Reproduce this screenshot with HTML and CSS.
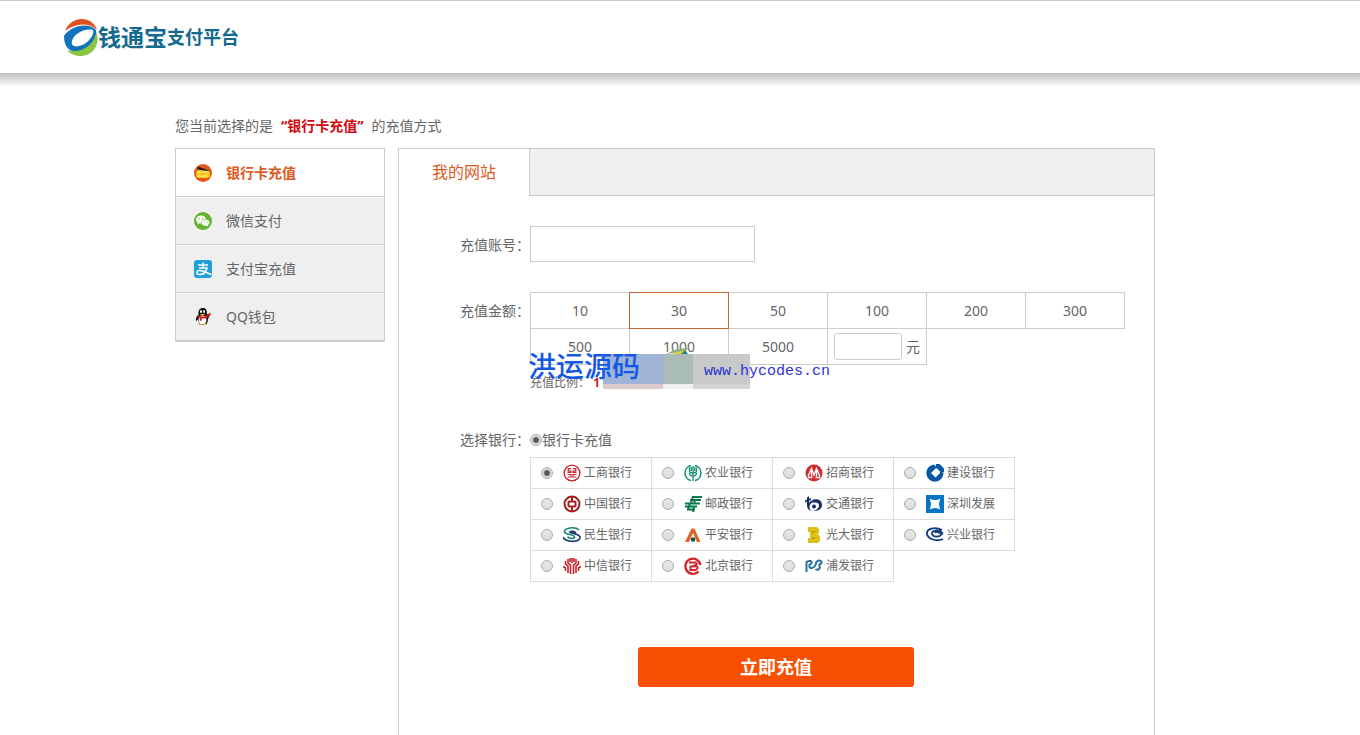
FILE: index.html
```html
<!DOCTYPE html>
<html lang="zh-CN">
<head>
<meta charset="utf-8">
<title>钱通宝支付平台</title>
<link rel="stylesheet" href="styles.css">
</head>
<body>
<header class="header">
  <a class="logo" href="#">
    <svg class="logo-mark" viewBox="0 0 34 38" aria-hidden="true">
      <path d="M1 13C4 5 11 1 18 1c8 0 13 5 15 11C25 4 11 5 1 13z" fill="#e2501c"/>
      <path d="M3 32c10 4 24-3 29-18 5 11-2 23-14 24-7 0-12-2-15-6z" fill="#8cc63f"/>
      <path d="M0 18C7 7 25 4 32 12c1 11-11 22-23 21C3 32 0 26 0 18zm8 5c-2 7 8 7 15 1 5-4 7-9 6-12-7-2-19 3-21 11z" fill="#1273bd" fill-rule="evenodd"/>
    </svg>
    <span class="logo-name">钱通宝</span><span class="logo-sub">支付平台</span>
  </a>
</header>
<main class="page">
  <p class="current">您当前选择的是<strong class="current-name">“银行卡充值”</strong>的充值方式</p>
  <div class="columns">
    <nav class="menu">
      <a class="menu-item menu-item-on" href="#">
        <svg class="menu-icon" viewBox="0 0 18 18"><circle cx="9" cy="9" r="9" fill="#e2551d"/><path d="M4 2.500l11 4v2L3 5z" fill="#222"/><path d="M2 8l2-2 11 1 1 2v4l-2 1H4l-2-1z" fill="#fcc60f"/><path d="M3 8h12" stroke="#fff3a8"/><path d="M4 12h10" stroke="#fff" stroke-dasharray="2 1"/></svg>
        银行卡充值</a>
      <a class="menu-item" href="#">
        <svg class="menu-icon" viewBox="0 0 18 18"><circle cx="9" cy="9" r="9" fill="#62b32f"/><path d="M7 3.500c-3 0-5 1.900-5 4 0 1.200.7 2.400 1.800 3.100L3.500 12.500l2-1.200c3.500.6 6.500-1 6.500-3.800C12 5.200 9.800 3.500 7 3.500z" fill="#fff"/><path d="M11.700 7.300c-2.700 0-4.400 1.600-4.400 3.500 0 2.400 2.500 3.800 5.200 3.200l1.900 1-.5-1.600c1.100-.6 1.900-1.600 1.900-2.800 0-1.900-1.900-3.300-4.100-3.300z" fill="#fff" stroke="#62b32f" stroke-width=".6"/><g fill="#62b32f"><circle cx="5.300" cy="6.500" r=".7"/><circle cx="8.500" cy="6.500" r=".7"/><circle cx="10.300" cy="10" r=".6"/><circle cx="13" cy="10" r=".6"/></g></svg>
        微信支付</a>
      <a class="menu-item" href="#">
        <svg class="menu-icon" viewBox="0 0 18 18"><rect width="18" height="18" rx="3" fill="#1fa0dc"/><path d="M4 5h10M9 2.500V8M5 8h8c-1 4-4 6.500-7.500 6.500-3.500 0-3.500-4 0-4 4 0 7 2.500 12 4" fill="none" stroke="#fff" stroke-width="1.500"/></svg>
        支付宝充值</a>
      <a class="menu-item" href="#">
        <svg class="menu-icon" viewBox="0 0 18 18"><path d="M9 0C5.500 0 4 2.500 4.500 6.500 2 9 1.500 11 2 13l2-1.500C5 16 6 17 9 17s5-2 5-6l2-4-3-1C13 2 12 0 9 0z" fill="#111"/><ellipse cx="8.500" cy="12" rx="4" ry="4.500" fill="#fff"/><ellipse cx="7" cy="3.500" rx="1" ry="1.500" fill="#fff"/><ellipse cx="10" cy="3.500" rx="1" ry="1.500" fill="#fff"/><path d="M5.500 6h6l-2 1.500h-2z" fill="#f5a814"/><path d="M4 7c3 2 7 2 9 0l3-2.500 1 2-4 3c-2 1.500-3.500 1-5 1L7.500 13l-2-.5.5-2.500-2.500-1z" fill="#d9201f"/><path d="M4.500 16.500h3.500M9.500 16.500H13" stroke="#e8b040" stroke-width="1.200"/></svg>
        QQ钱包</a>
    </nav>
    <section class="panel">
      <div class="tabs"><a class="tab" href="#">我的网站</a></div>
      <form class="form">
        <div class="row">
          <label class="row-label" for="account">充值账号：</label>
          <input class="account" id="account" type="text">
        </div>
        <div class="row">
          <span class="row-label">充值金额：</span>
          <div class="amount-area">
            <div class="amounts">
              <button class="amount" type="button">10</button>
              <button class="amount amount-on" type="button">30</button>
              <button class="amount" type="button">50</button>
              <button class="amount" type="button">100</button>
              <button class="amount" type="button">200</button>
              <button class="amount" type="button">300</button>
              <button class="amount" type="button">500</button>
              <button class="amount" type="button">1000</button>
              <button class="amount" type="button">5000</button>
              <label class="amount amount-custom"><input class="custom" type="text">元</label>
            </div>
            <p class="ratio">充值比例： <b class="ratio-value">1</b></p>
            <div class="watermark">
              <div class="mark-blocks"><i class="block block-blue"></i><i class="block block-green"></i><i class="block block-gray"></i></div>
              <svg class="mark-leaf" viewBox="0 0 24 8"><path d="M0 6Q10 0 22 0l-2 3z" fill="#8fb08a"/><path d="M5 6L19 2l-2 4z" fill="#e3cf2e"/><path d="M15 6l4-4 3 4z" fill="#1f8590"/></svg>
              <span class="mark-name">洪运源码</span>
              <span class="mark-url">www.hycodes.cn</span>
            </div>
          </div>
        </div>
        <div class="row row-bank">
          <span class="row-label">选择银行：</span>
          <div>
            <label class="method"><input class="radio" type="radio" name="method" checked>银行卡充值</label>
            <div class="banks">
              <label class="bank"><input class="radio" type="radio" name="bank" checked><svg class="bank-icon" viewBox="0 0 18 18"><g fill="none" stroke="#c9252b"><circle cx="9" cy="9" r="7.900" stroke-width="1.400"/><path d="M8 4.700H5.200v2.500H8v1.300H4.500M10 4.700h2.800v2.500H10v1.300h3.500M4.500 10.500H8V13H5M13.500 10.500H10V13h3" stroke-width="1.200"/></g></svg>工商银行</label>
              <label class="bank"><input class="radio" type="radio" name="bank"><svg class="bank-icon" viewBox="0 0 18 18"><g fill="none" stroke="#119171"><path d="M7 1.500a7.700 7.700 0 0 0 0 15M11 1.500a7.700 7.700 0 0 1 0 15" stroke-width="1.500"/><path d="M9 2v15M5.500 3.500v3.500q0 2 3.500 2 3.500 0 3.500-2V3.500M5.500 9q0 3 3.500 3 3.500 0 3.500-3M7.300 3v4M10.700 3v4" stroke-width="1.300"/></g></svg>农业银行</label>
              <label class="bank"><input class="radio" type="radio" name="bank"><svg class="bank-icon" viewBox="0 0 18 18"><circle cx="9" cy="9" r="8.500" fill="#d32b33"/><path d="M3 12.500L6.500 4.500 9 11l2.500-6.500L15 12.500M6.500 7v5.500M11.500 7v5.500M3 13.500h4.500M10.500 13.500H15" fill="none" stroke="#fff" stroke-width="1.300"/></svg>招商银行</label>
              <label class="bank"><input class="radio" type="radio" name="bank"><svg class="bank-icon" viewBox="0 0 18 18"><path d="M8 .5L11.500 4l-2 .500L5 9l4.500 4.500L14 9l-.500-1.500L17.500 8.500A8.600 8.600 0 1 1 8 .5z" fill="#0757a5"/><path d="M10 0h3.500L18 4.500V8h-3.500L10 3.500z" fill="#0757a5"/></svg>建设银行</label>
              <label class="bank"><input class="radio" type="radio" name="bank"><svg class="bank-icon" viewBox="0 0 18 18"><g fill="none" stroke="#a71e20" stroke-width="2"><circle cx="9" cy="9" r="7.500"/><rect x="5.500" y="6.500" width="7" height="5" rx="1"/><path d="M9 2v4.500M9 11.500V16"/></g></svg>中国银行</label>
              <label class="bank"><input class="radio" type="radio" name="bank"><svg class="bank-icon" viewBox="0 0 18 18"><path d="M8 2h10M6 5h11M1 8.500h15M1 11.500h12M3 14.500h8M9 1.500L7 8M6 8.500L4 14M11 5l-1 3.500M10 11.500L9 17" fill="none" stroke="#087a4b" stroke-width="2"/></svg>邮政银行</label>
              <label class="bank"><input class="radio" type="radio" name="bank"><svg class="bank-icon" viewBox="0 0 18 18"><path d="M4 1L2 2.500V10c0 3 1.500 5 4 6-1.500-2-2-4-1-6 1-2 3-3 5-2.500V5C7 5 5 6 4 8z" fill="#172d68"/><path d="M8 4.500c5-1 9 1 9 5.500 0 4-4 6.500-9 6 4-1 6-3 6-5.500S12 7 9 7.500z" fill="#172d68"/><circle cx="9" cy="11.500" r="2" fill="#172d68"/><path d="M0 5.500L6 3v2L0 7.500z" fill="#172d68"/></svg>交通银行</label>
              <label class="bank"><input class="radio" type="radio" name="bank"><svg class="bank-icon" viewBox="0 0 18 18"><path d="M0 0h18v18H0z" fill="#0774c2"/><path d="M3.500 3.500Q9 6.500 14.500 3.500 11.500 9 14.500 14.500 9 11.500 3.500 14.500 6.500 9 3.500 3.500z" fill="#fff"/></svg>深圳发展</label>
              <label class="bank"><input class="radio" type="radio" name="bank"><svg class="bank-icon" viewBox="0 0 18 18"><path d="M16 4C12 0 1 2 1.500 6c1 3 10 2 10 5 0 2-4 2-7 0" fill="none" stroke="#168878" stroke-width="1.700"/><path d="M0 11c2 5 15 6 17 1 1-5-10-4-10-6 0-1 4-1 6 1" fill="none" stroke="#17396f" stroke-width="1.700"/></svg>民生银行</label>
              <label class="bank"><input class="radio" type="radio" name="bank"><svg class="bank-icon" viewBox="0 0 18 18"><path d="M7.500 2.500h3L16.500 16H13L9 7 5 16H1z" fill="#df6325"/><circle cx="9" cy="13.500" r="2.300" fill="#14554c"/></svg>平安银行</label>
              <label class="bank"><input class="radio" type="radio" name="bank"><svg class="bank-icon" viewBox="0 0 18 18"><path d="M3 1h9l2 2v4l-1.500 1.500L15 10v4.500L13 17H3v-5h2V6H3z" fill="#ddc117"/><path d="M7 5h3v2H7zM7 11h3v2H7z" fill="#b9a312"/></svg>光大银行</label>
              <label class="bank"><input class="radio" type="radio" name="bank"><svg class="bank-icon" viewBox="0 0 18 18"><path d="M16 4C9 0 0 3 1 8s9 8 16 5M17 7.500C12 2 5 5 6 8s7 4 10 0c-3-2-6-3-7-1" fill="none" stroke="#103d82" stroke-width="1.800"/></svg>兴业银行</label>
              <label class="bank"><input class="radio" type="radio" name="bank"><svg class="bank-icon" viewBox="0 0 18 18"><path d="M7.500 17V8L5 6V2M10.500 17V8L13 6V2M9 1v5M5 16V9L2.500 7V4M13 16V9l2.500-2V4M2.500 14v-3L0 9.500M15.500 14v-3L18 9.500M7 1v4M11 1v4" fill="none" stroke="#c5262d" stroke-width="1.600"/></svg>中信银行</label>
              <label class="bank"><input class="radio" type="radio" name="bank"><svg class="bank-icon" viewBox="0 0 18 18"><path d="M14.500 14.500A7.600 7.600 0 1 1 16.500 8" fill="none" stroke="#d5212b" stroke-width="2.300"/><path d="M5 5.500h6q2 0 1.500 2L9 9.200h3q2 .3 1.500 2-.5 1.800-2.500 1.800H6.500V9.500H9" fill="none" stroke="#d5212b" stroke-width="1.900"/></svg>北京银行</label>
              <label class="bank"><input class="radio" type="radio" name="bank"><svg class="bank-icon" viewBox="0 0 18 18"><path d="M1.500 15V5c3-2 6-1 5 1-1 1.500-3 1-2 4 1 2 5 1 6-2l1-3c2-3 6-1 5 1-1 1-3 1-2 3s-1 5-4 3" fill="none" stroke="#28709e" stroke-width="2"/></svg>浦发银行</label>
            </div>
          </div>
        </div>
        <button class="submit" type="submit">立即充值</button>
      </form>
    </section>
  </div>
</main>
</body>
</html>
```
FILE: styles.css
```css
* { box-sizing: border-box; }
body {
  margin: 0;
  min-height: 100vh;
  display: flex;
  flex-direction: column;
  background: #fff;
  color: #666;
  font: 14px/20px "Noto Sans", "Noto Sans CJK SC", sans-serif;
}
a { color: inherit; text-decoration: none; }
p { margin: 0; }
button, input { font: inherit; color: inherit; margin: 0; }

.header {
  border-top: 1px solid #c8c8c8;
  padding: 0 64px;
}
.header::after {
  content: "";
  display: block;
  height: 14px;
  margin: 0 -64px;
  background: linear-gradient(#bfbfbf, #d8d8d8 40%, #fff);
}
.logo {
  display: flex;
  align-items: center;
  height: 72px;
  color: #14698f;
  font-weight: 700;
}
.logo-mark { width: 34px; height: 38px; }
.logo-name { font-size: 23px; }
.logo-sub { font-size: 18px; }

.page {
  flex: 1;
  display: flex;
  flex-direction: column;
  width: 100%;
  max-width: 1010px;
  margin: 0 auto;
  padding: 29px 30px 0 0;
}
.current { margin-bottom: 12px; }
.current-name { margin: 0 8px; color: #d0080c; }
.columns { flex: 1; display: flex; gap: 13px; }

.menu {
  flex: none;
  align-self: flex-start;
  width: 210px;
  border: 1px solid #ccc;
  border-bottom-width: 2px;
}
.menu-item {
  display: flex;
  align-items: center;
  gap: 14px;
  height: 48px;
  padding-left: 18px;
  background: #efefef;
  border-top: 1px solid #ccc;
  box-shadow: inset 0 1px #fff;
}
.menu-item:first-child { height: 47px; border-top: 0; }
.menu-item-on { background: #fff; color: #dc5a1e; font-weight: 700; }
.menu-icon { width: 18px; height: 18px; }

.panel { flex: 1; border: 1px solid #ccc; border-bottom: 0; }
.tabs { display: flex; height: 47px; background: #efefef; }
.tabs::after { content: ""; flex: 1; border-bottom: 1px solid #ccc; }
.tab {
  width: 131px;
  border-right: 1px solid #ccc;
  background: #fff;
  color: #dc5a1e;
  font-size: 16px;
  line-height: 46px;
  text-align: center;
}

.form { padding: 30px 24px 40px 61px; }
.row { display: flex; margin-bottom: 30px; }
.row-label { flex: none; width: 70px; line-height: 38px; }
.account { width: 225px; height: 36px; padding: 0 8px; border: 1px solid #ccc; }
.row:first-child { height: 36px; }

.amount-area { position: relative; }
.amounts { display: grid; grid-template-columns: repeat(6, 99px); grid-auto-rows: 36px; }
.amount {
  width: 100px;
  height: 37px;
  padding: 0;
  border: 1px solid #ccc;
  background: #fff;
}
.amount-on { position: relative; border-color: #c8622e; }
.amount-custom { display: flex; align-items: center; gap: 4px; padding-left: 6px; }
.custom { width: 68px; height: 27px; border: 1px solid #ccc; border-radius: 3px; }
.ratio { margin-top: 9px; font-size: 12px; }
.ratio-value { position: relative; z-index: 1; color: #c8202a; }

.watermark { position: absolute; left: -3px; top: 56px; width: 310px; height: 42px; }
.mark-blocks { position: absolute; left: 76px; top: 6px; display: flex; }
.block { height: 35px; }
.block-blue { width: 60px; background: linear-gradient(#9fb4d6 30px, #dccaca 30px); }
.block-green { width: 30px; background: linear-gradient(#a9bcb8 30px, #f0f0f0 30px); }
.block-gray { width: 57px; background: linear-gradient(#c8c9cb 30px, #d4d4d4 30px); }
.mark-leaf { position: absolute; left: 139px; top: 0; width: 24px; height: 8px; }
.mark-name {
  position: absolute;
  left: 1px;
  top: 4px;
  color: #1458e6;
  font-size: 28px;
  line-height: 28px;
  font-weight: 500;
  white-space: nowrap;
}
.mark-url {
  position: absolute;
  left: 177px;
  top: 14px;
  color: #2b35d0;
  font: 15px/20px "Liberation Mono", monospace;
}

.row-bank { margin-bottom: 66px; padding-top: 7px; }
.row-bank .row-label { line-height: 20px; }
.method { display: flex; align-items: center; height: 20px; margin-bottom: 7px; }
.radio {
  appearance: none;
  flex: none;
  width: 12px;
  height: 12px;
  border: 1px solid #aaa;
  border-radius: 50%;
  background: linear-gradient(#e8e8e8, #dcdcdc);
}
.radio:checked { background: radial-gradient(circle, #555 2px, #e4e4e4 4px); }
.banks {
  display: grid;
  grid-template-columns: repeat(4, 121px);
  grid-auto-rows: 31px;
  font-size: 12px;
}
.bank {
  display: flex;
  align-items: center;
  width: 122px;
  height: 32px;
  padding-left: 10px;
  border: 1px solid #ddd;
}
.bank-icon { width: 18px; height: 18px; margin: 0 3px 0 10px; }

.submit {
  display: block;
  width: 276px;
  height: 40px;
  margin-left: 178px;
  border: 0;
  border-radius: 3px;
  background: #f85000;
  color: #fff;
  font-size: 18px;
  font-weight: 700;
}
```
